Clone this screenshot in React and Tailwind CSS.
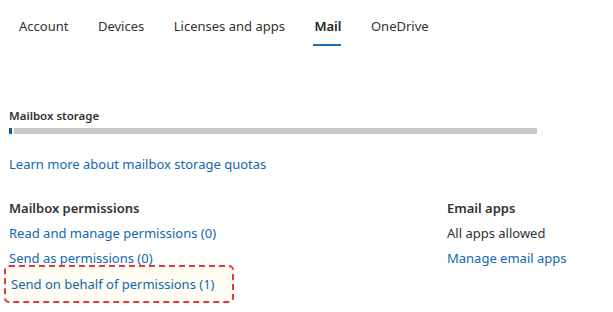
const tabs = ["Account", "Devices", "Licenses and apps", "Mail", "OneDrive"];

const App = () => {
  return (
    <div
      className="w-[613px] h-[312px] bg-white text-[#323130] overflow-hidden"
      style={{ fontFamily: '"Noto Sans", "Open Sans", sans-serif' }}
    >
      <nav className="flex pl-[19px] pt-[15px] h-[47px] text-[13px]">
        {tabs.map((t) => (
          <div key={t} className="relative mr-[29.5px] leading-[22px]">
            <span className={t === "Mail" ? "font-semibold text-[#252423]" : ""}>{t}</span>
            {t === "Mail" && (
              <span className="absolute -left-[1px] right-0 top-[29px] h-[2px] bg-[#1b6fb0]" />
            )}
          </div>
        ))}
      </nav>

      <section className="pl-[9px] pt-[61px]">
        <h3 className="text-[11.5px] font-semibold leading-[16px]">Mailbox storage</h3>
        <div className="flex items-center gap-[2px] mt-[4px] w-[528px] h-[6px]">
          <div className="w-[3px] h-full bg-[#0f5a97]" />
          <div className="flex-1 h-full bg-[#c8c8c8]" />
        </div>
        <a className="block mt-[21px] text-[13px] leading-[18px] text-[#1167b1]">
          Learn more about mailbox storage quotas
        </a>
      </section>

      <section className="flex pl-[9px] pt-[26px] text-[13px]">
        <div className="w-[438px]">
          <h3 className="font-semibold leading-[18px]">Mailbox permissions</h3>
          <div className="flex flex-col text-[#1167b1] leading-[18px]">
            <a className="mt-[7px]">Read and manage permissions (0)</a>
            <a className="mt-[7px]">Send as permissions (0)</a>
            <div className="-mt-[2px] -ml-[5px] w-[230px] h-[38px] flex items-center pl-[5px] rounded-[5px] border-2 border-dashed border-[#e0393e] bg-[#fffdf1]">
              <a>Send on behalf of permissions (1)</a>
            </div>
          </div>
        </div>
        <div>
          <h3 className="font-semibold leading-[18px]">Email apps</h3>
          <p className="mt-[7px] leading-[18px]">All apps allowed</p>
          <a className="block mt-[7px] leading-[18px] text-[#1167b1]">Manage email apps</a>
        </div>
      </section>
    </div>
  );
};

export default App;
